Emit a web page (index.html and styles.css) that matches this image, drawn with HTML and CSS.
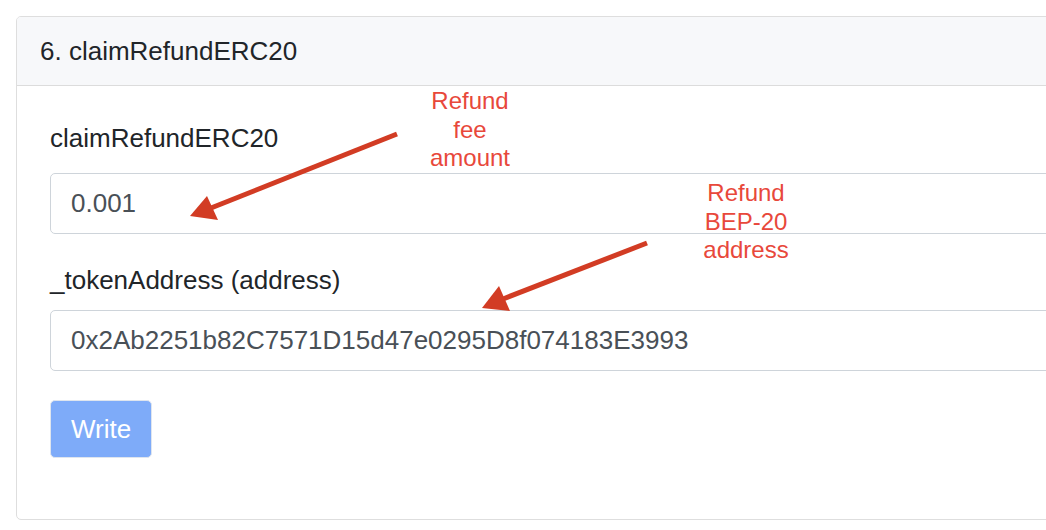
FILE: index.html
```html
<!DOCTYPE html>
<html>
<head>
<meta charset="utf-8">
<link rel="stylesheet" href="styles.css">
</head>
<body>
<div class="page">
  <section class="card">
    <header class="card-header">6. claimRefundERC20</header>
    <div class="card-body">
      <div class="form-group">
        <label class="field-label">claimRefundERC20</label>
        <input class="field-input" type="text" value="0.001">
      </div>
      <div class="form-group">
        <label class="field-label field-label--tight">_tokenAddress (address)</label>
        <input class="field-input" type="text" value="0x2Ab2251b82C7571D15d47e0295D8f074183E3993">
      </div>
      <button class="btn-write" type="button">Write</button>
    </div>
  </section>

  <svg class="arrows" width="1046" height="530" viewBox="0 0 1046 530">
    <line x1="397" y1="134" x2="211" y2="208" class="arrow-line"/>
    <polygon points="190,216 207,196 218,220" class="arrow-head"/>
    <line x1="647" y1="243" x2="503" y2="299" class="arrow-line"/>
    <polygon points="482,308 499,286 510,311" class="arrow-head"/>
  </svg>

  <div class="note note--fee">Refund<br>fee<br>amount</div>
  <div class="note note--addr">Refund<br>BEP-20<br>address</div>
</div>
</body>
</html>
```

FILE: styles.css
```css
html, body {
  margin: 0;
  padding: 0;
  background: #ffffff;
  overflow: hidden;
  width: 1046px;
  height: 530px;
}

.page {
  position: relative;
  width: 1046px;
  height: 530px;
  padding: 16px 0 0 16px;
  box-sizing: border-box;
  font-family: "Liberation Sans", Arial, Helvetica, sans-serif;
}

.card {
  width: 1100px;
  border: 1px solid #dedede;
  border-radius: 5px;
  background: #ffffff;
  overflow: hidden;
}

.card-header {
  display: flex;
  align-items: center;
  height: 68px;
  padding: 0 23px;
  background: #f7f8fa;
  border-bottom: 1px solid #dcdcdc;
  font-size: 26px;
  color: #212529;
}

.card-body {
  padding: 37px 33px 61px 33px;
}

.form-group {
  display: flex;
  flex-direction: column;
}

.form-group + .form-group {
  margin-top: 31px;
}

.field-label {
  font-size: 26px;
  line-height: 31px;
  color: #212529;
  margin-bottom: 19px;
}

.field-label--tight {
  margin-bottom: 14px;
}

.field-input {
  box-sizing: border-box;
  width: 100%;
  height: 61px;
  margin: 0;
  padding: 0 20px;
  border: 1px solid #ced4da;
  border-radius: 5px;
  font-family: "Liberation Sans", Arial, Helvetica, sans-serif;
  font-size: 26px;
  color: #495057;
  background: #ffffff;
  outline: none;
}

.btn-write {
  display: block;
  margin-top: 29px;
  box-sizing: border-box;
  height: 58px;
  padding: 0 20px;
  border: 1px solid #dfe5ee;
  border-radius: 5px;
  background: #7eabf9;
  color: #ffffff;
  font-family: "Liberation Sans", Arial, Helvetica, sans-serif;
  font-size: 26px;
  line-height: 31px;
}

.arrows {
  position: absolute;
  left: 0;
  top: 0;
  pointer-events: none;
}

.arrow-line {
  stroke: #d23c24;
  stroke-width: 5;
}

.arrow-head {
  fill: #d23c24;
}

.note {
  position: absolute;
  width: 160px;
  text-align: center;
  font-size: 24px;
  line-height: 28.5px;
  color: #e8483b;
}

.note--fee {
  left: 390px;
  top: 87px;
}

.note--addr {
  left: 666px;
  top: 179px;
}
```
